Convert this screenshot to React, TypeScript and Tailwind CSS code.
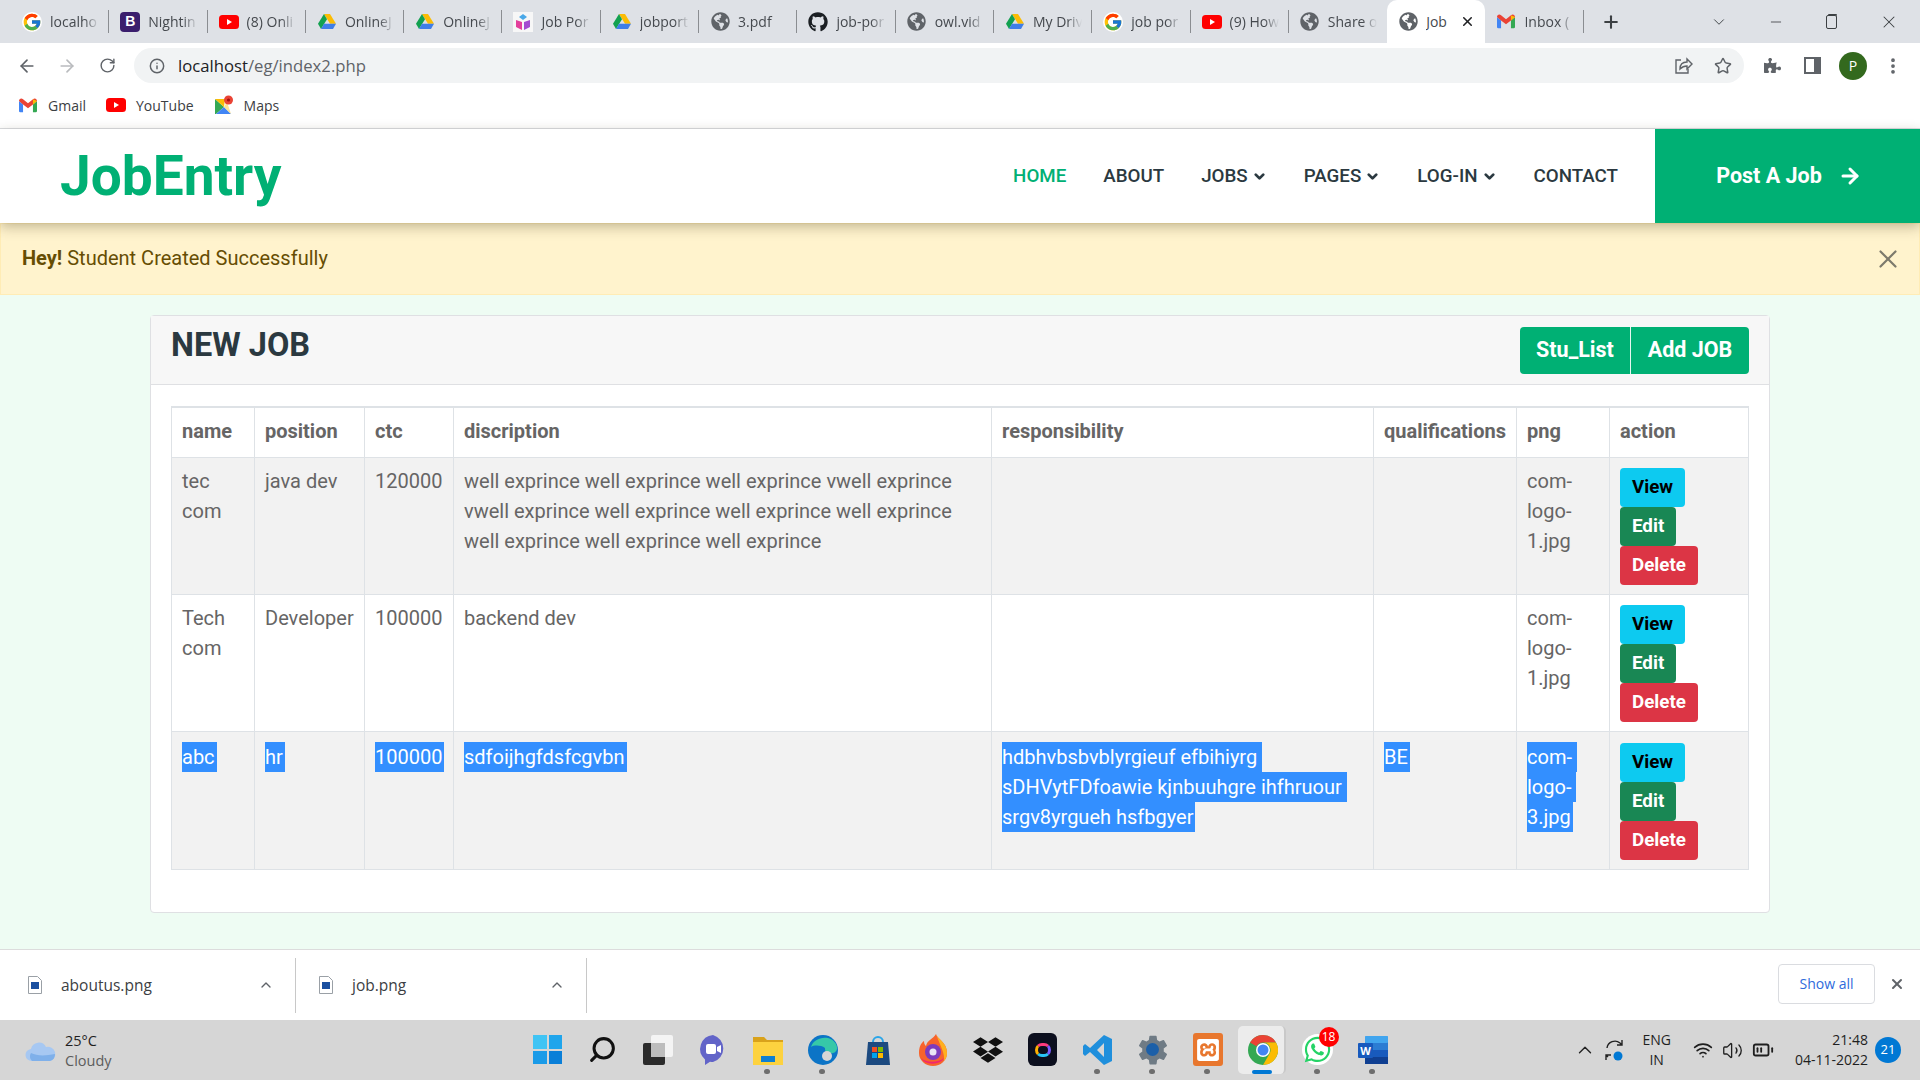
import type { ReactNode } from "react";
import { ArrowLeft, ArrowRight, ChevronDown, ChevronUp, Info, Minus, MoreVertical, Plus, RotateCw, Search, Star, Volume2, Wifi, X, BatteryMedium } from "lucide-react";
import { FaGithub, FaGlobeAmericas, FaDropbox, FaPuzzlePiece, FaWhatsapp } from "react-icons/fa";
import { FcGoogle } from "react-icons/fc";
import { SiXampp } from "react-icons/si";
import { IoSettingsSharp } from "react-icons/io5";

const GREEN = "bg-[#00b074]";

function DriveIcon() {
  return (
    <svg viewBox="0 0 24 22" className="w-[18px] h-[17px]">
      <path d="M8 1h8l8 13h-8z" fill="#fbbc04" />
      <path d="M8 1 0 14l4 7 8-13z" fill="#12a150" />
      <path d="M4 21h16l4-7H8z" fill="#3f7ee8" />
    </svg>
  );
}

function YoutubeIcon() {
  return (
    <svg viewBox="0 0 20 20" className="w-[20px] h-[20px]">
      <rect x="0" y="3" width="20" height="14" rx="3.5" fill="#f00" />
      <path d="M8 7l5 3-5 3z" fill="#fff" />
    </svg>
  );
}

function GmailIcon() {
  return (
    <svg viewBox="0 0 20 16" className="w-[18px] h-[15px]">
      <path d="M0 3v11a1.5 1.5 0 0 0 1.5 1.5H4.500V7z" fill="#4285f4" />
      <path d="M20 3v11a1.500 1.500 0 0 1-1.500 1.500H15.500V7z" fill="#34a853" />
      <path d="M0 3c0-2.500 2.500-3.500 4.500-2L10 5.500 15.500 1C17.500-.5 20 .5 20 3l-4.500 4L10 11 4.500 7z" fill="#ea4335" />
      <path d="M15.500 1 20 3l-4.500 4z" fill="#fbbc04" />
    </svg>
  );
}

function MapsIcon() {
  return (
    <svg viewBox="0 0 20 20" className="w-[20px] h-[20px]">
      <path d="M1 4l9 8-8 7H1z" fill="#34a853" />
      <path d="M2 19l8-7 7 7z" fill="#4285f4" />
      <path d="M1 4h10l-1 8z" fill="#fbbc04" />
      <path d="M10 12l3-5 4 12z" fill="#fde293" />
      <circle cx="14.500" cy="5" r="4.500" fill="#ea4335" />
      <circle cx="14.500" cy="5" r="1.600" fill="#a50e0e" />
    </svg>
  );
}

function BootstrapIcon() {
  return (
    <div className="w-[20px] h-[20px] rounded-[4px] bg-[#3b1e6d] text-white text-[14px] font-bold flex items-center justify-center font-['Liberation_Sans',sans-serif]">B</div>
  );
}

function JobPortalIcon() {
  return (
    <svg viewBox="0 0 20 20" className="w-[20px] h-[20px]">
      <rect width="20" height="20" fill="#f7f7f7" />
      <path d="M10 2l4 3-4 3-4-3z" fill="#4aa8e8" />
      <path d="M3 8l6 2v8l-6-3z" fill="#e33f9c" />
      <path d="M17 8l-6 2v8l6-3z" fill="#a44bd0" />
    </svg>
  );
}

function ShareIcon() {
  return (
    <svg viewBox="0 0 20 20" fill="none" stroke="#5f6368" strokeWidth="1.4" className="w-[20px] h-[20px] ml-auto">
      <path d="M8 4H3v13h12v-4" />
      <path d="M7 13c0-5 3-7 7-7V3l5 5-5 5v-3c-3 0-5 1-7 3z" />
    </svg>
  );
}

const Globe = () => <FaGlobeAmericas className="w-[19px] h-[19px] text-[#5f6368]" />;
const Google = () => <FcGoogle className="w-[20px] h-[20px] bg-white rounded-full" />;

const tabs: { title: string; icon: ReactNode; active?: boolean }[] = [
  { title: "localho", icon: <Google /> },
  { title: "Nightin", icon: <BootstrapIcon /> },
  { title: "(8) Onli", icon: <YoutubeIcon /> },
  { title: "OnlineJ", icon: <DriveIcon /> },
  { title: "OnlineJ", icon: <DriveIcon /> },
  { title: "Job Por", icon: <JobPortalIcon /> },
  { title: "jobport", icon: <DriveIcon /> },
  { title: "3.pdf", icon: <Globe /> },
  { title: "job-por", icon: <FaGithub className="w-[20px] h-[20px] text-[#1b1f23]" /> },
  { title: "owl.vid", icon: <Globe /> },
  { title: "My Driv", icon: <DriveIcon /> },
  { title: "job por", icon: <Google /> },
  { title: "(9) How", icon: <YoutubeIcon /> },
  { title: "Share o", icon: <Globe /> },
  { title: "Job", icon: <Globe />, active: true },
  { title: "Inbox (", icon: <GmailIcon /> },
];

function Tab({ title, icon, active, last }: { title: string; icon: ReactNode; active?: boolean; last?: boolean }) {
  return (
    <div className={`w-[98.3px] h-[43px] flex items-center pl-[10px] pr-[10px] shrink-0 relative ${active ? "bg-white rounded-t-[10px]" : ""}`}>
      <div className="w-[22px] flex justify-center shrink-0">{icon}</div>
      <div className={`ml-[7px] text-[14px] whitespace-nowrap overflow-hidden flex-1 text-[#45494e] ${active ? "" : "[mask-image:linear-gradient(to_right,black_70%,transparent)]"}`}>{title}</div>
      {active && <X className="w-[15px] h-[15px] text-[#202124] shrink-0" strokeWidth={2.5} />}
      {!active && !last && <div className="absolute right-0 top-[10px] h-[23px] w-px bg-[#8a8d91]" />}
    </div>
  );
}

function ChromeBar() {
  return (
    <div className="font-['Open_Sans',sans-serif]">
      <div className="h-[43px] bg-[#dee1e6] flex items-center pl-[11px]">
        {tabs.map((t, i) => (
          <Tab key={i} title={t.title} icon={t.icon} active={t.active} last={i === 13} />
        ))}
        <Plus className="w-[20px] h-[20px] text-[#3c4043] ml-[17px]" strokeWidth={2.5} />
        <ChevronDown className="w-[18px] h-[18px] text-[#3c4043] ml-[89px]" strokeWidth={1.25} />
        <Minus className="w-[16px] h-[16px] text-[#3c4043] ml-[40px]" strokeWidth={1.25} />
        <div className="ml-[42px] w-[11px] h-[14px] border border-[#3c4043] rounded-[2px] shadow-[1px_-2px_0_-1px_#3c4043]" />
        <X className="w-[20px] h-[20px] text-[#3c4043] ml-[42px]" strokeWidth={1.25} />
      </div>
      <div className="h-[41px] pt-[4px] bg-white flex items-center">
        <ArrowLeft className="w-[20px] h-[20px] text-[#5f6368] ml-[17px]" strokeWidth={2} />
        <ArrowRight className="w-[20px] h-[20px] text-[#b9bbbe] ml-[20px]" strokeWidth={2} />
        <RotateCw className="w-[17px] h-[17px] text-[#5f6368] ml-[22px]" strokeWidth={2} />
        <div className="ml-[18px] w-[1610px] h-[35px] rounded-full bg-[#f1f3f4] flex items-center pl-[15px]">
          <Info className="w-[16px] h-[16px] text-[#5f6368]" strokeWidth={2.2} />
          <div className="ml-[13px] text-[16.700px] text-[#202124]">localhost<span className="text-[#5f6368]">/eg/index2.php</span></div>
          <ShareIcon />
          <Star className="w-[18px] h-[18px] text-[#5f6368] ml-[21px] mr-[12px]" strokeWidth={2} />
        </div>
        <FaPuzzlePiece className="w-[17px] h-[17px] text-[#5f6368] ml-[20px]" />
        <div className="ml-[23px] w-[17px] h-[17px] border-[2.5px] border-[#5f6368] border-r-[7px]" />
        <div className="ml-[18px] w-[28px] h-[28px] rounded-full bg-[#33691e] text-white text-[14px] flex items-center justify-center">P</div>
        <MoreVertical className="w-[20px] h-[20px] text-[#5f6368] ml-[16px]" strokeWidth={2.5} />
      </div>
      <div className="h-[45px] pb-[2px] bg-white border-b border-[#dadce0] flex items-center text-[14px] text-[#3c4043]">
        <div className="ml-[19px] w-[18px] flex justify-center"><GmailIcon /></div>
        <span className="ml-[11px]">Gmail</span>
        <div className="ml-[20px]"><YoutubeIcon /></div>
        <span className="ml-[10px]">YouTube</span>
        <div className="ml-[20px]"><MapsIcon /></div>
        <span className="ml-[10px]">Maps</span>
      </div>
    </div>
  );
}

function NavItem({ label, active, caret }: { label: string; active?: boolean; caret?: boolean }) {
  return (
    <div className={`flex items-center gap-[4px] text-[18.750px] font-medium uppercase ${active ? "text-[#00b074]" : "text-[#2b3940]"}`}>
      {label}
      {caret && <ChevronDown className="w-[15px] h-[15px]" strokeWidth={4.5} />}
    </div>
  );
}

function Navbar() {
  return (
    <div className="h-[94px] bg-white flex items-center relative z-10 shadow-[0_4px_12px_rgba(60,50,20,0.3)]">
      <div className="ml-[60px] text-[55px] font-bold text-[#00b074] leading-none">JobEntry</div>
      <div className="ml-auto flex items-center gap-[37px] mr-[37px]">
        <NavItem label="Home" active />
        <NavItem label="About" />
        <NavItem label="Jobs" caret />
        <NavItem label="Pages" caret />
        <NavItem label="Log-in" caret />
        <NavItem label="Contact" />
      </div>
      <div className={`${GREEN} w-[265px] h-full pl-[3px] text-white text-[21.500px] font-bold flex items-center justify-center gap-[16px]`}>
        Post A Job
        <ArrowRight className="w-[24px] h-[24px]" strokeWidth={3} />
      </div>
    </div>
  );
}

function Actions() {
  return (
    <div className="flex flex-col items-start text-[18.750px] font-bold leading-[26px]">
      <div className="h-[39px] px-[12px] rounded-[4px] bg-[#0dcaf0] text-black flex items-center">View</div>
      <div className="h-[39px] px-[12px] rounded-[4px] bg-[#198754] text-white flex items-center">Edit</div>
      <div className="h-[39px] px-[12px] rounded-[4px] bg-[#dc3545] text-white flex items-center">Delete</div>
    </div>
  );
}

function Sel({ lines }: { lines: string[] }) {
  return (
    <div className="mt-[2px]">
      {lines.map((l, i) => (
        <div key={i} className={`w-fit h-[30px] bg-[#338fff] text-white whitespace-nowrap ${lines.length > 1 && i < lines.length - 1 ? "pr-[5px]" : "pr-[2px]"}`}>{l}</div>
      ))}
    </div>
  );
}

const heads = ["name", "position", "ctc", "discription", "responsibility", "qualifications", "png", "action"];
const cell = "border border-[#dee2e6] px-[10px] pt-[8px] pb-[9px] align-top";

function JobTable() {
  return (
    <table className="w-[1577px] table-fixed border-collapse text-[20px] leading-[30px] text-[#666565] border-t-2 border-[#dee2e6]">
      <colgroup>
        <col className="w-[83px]" />
        <col className="w-[110px]" />
        <col className="w-[89px]" />
        <col className="w-[538px]" />
        <col className="w-[382px]" />
        <col className="w-[143px]" />
        <col className="w-[93px]" />
        <col className="w-[139px]" />
      </colgroup>
      <thead>
        <tr className="h-[50px]">
          {heads.map((h) => (
            <th key={h} className="border border-[#dee2e6] px-[10px] pb-[2px] text-left font-bold align-middle">{h}</th>
          ))}
        </tr>
      </thead>
      <tbody>
        <tr className="h-[137px] bg-[#f2f2f2]">
          <td className={cell}>tec com</td>
          <td className={cell}>java dev</td>
          <td className={cell}>120000</td>
          <td className={cell}>well exprince well exprince well exprince vwell exprince vwell exprince well exprince well exprince well exprince well exprince well exprince well exprince</td>
          <td className={cell}></td>
          <td className={cell}></td>
          <td className={cell}>com-logo-1.jpg</td>
          <td className={cell}><div className="pt-[2px]"><Actions /></div></td>
        </tr>
        <tr className="h-[137px] bg-white">
          <td className={cell}>Tech com</td>
          <td className={cell}>Developer</td>
          <td className={cell}>100000</td>
          <td className={cell}>backend dev</td>
          <td className={cell}></td>
          <td className={cell}></td>
          <td className={cell}>com-logo-1.jpg</td>
          <td className={cell}><div className="pt-[2px]"><Actions /></div></td>
        </tr>
        <tr className="h-[138px] bg-[#f2f2f2]">
          <td className={cell}><Sel lines={["abc"]} /></td>
          <td className={cell}><Sel lines={["hr"]} /></td>
          <td className={cell}><Sel lines={["100000"]} /></td>
          <td className={cell}><Sel lines={["sdfoijhgfdsfcgvbn"]} /></td>
          <td className={cell}><Sel lines={["hdbhvbsbvblyrgieuf efbihiyrg", "sDHVytFDfoawie kjnbuuhgre ihfhruour", "srgv8yrgueh hsfbgyer"]} /></td>
          <td className={cell}><Sel lines={["BE"]} /></td>
          <td className={cell}><Sel lines={["com-", "logo-", "3.jpg"]} /></td>
          <td className={cell}><div className="pt-[3px]"><Actions /></div></td>
        </tr>
      </tbody>
    </table>
  );
}

function Page() {
  return (
    <div className="h-[820px] bg-[#eefcf3] font-['Roboto',sans-serif]">
      <Navbar />
      <div className="h-[72px] bg-[#fff3cd] border border-[#ffecb5] flex items-center pl-[21px] pr-[16px] text-[20px] text-[#664d03]">
        <span className="-mt-[2px]"><b>Hey!</b> Student Created Successfully</span>
        <X className="w-[30px] h-[30px] text-[#7d7a6c] ml-auto" strokeWidth={1.75} />
      </div>
      <div className="mx-[150px] mt-[20px] h-[598px] bg-white border border-[#dfe0e3] rounded-[4px]">
        <div className="h-[69px] bg-[#f7f7f7] border-b border-[#dfe0e3] flex items-start justify-between pl-[20px] pr-[20px]">
          <div className="text-[32.500px] font-bold text-[#2b3940] mt-[11px] leading-[36px]">NEW JOB</div>
          <div className="flex mt-[11px] text-white text-[21.500px] font-bold">
            <div className={`${GREEN} h-[47px] w-[111px] rounded-l-[4px] flex items-center justify-center border-r border-[#e6f7f0]`}>Stu_List</div>
            <div className={`${GREEN} h-[47px] w-[118px] rounded-r-[4px] flex items-center justify-center`}>Add JOB</div>
          </div>
        </div>
        <div className="px-[20px] pt-[21px]">
          <JobTable />
        </div>
      </div>
    </div>
  );
}

function DownloadItem({ name, width, pad }: { name: string; width: string; pad: string }) {
  return (
    <div className={`h-[55px] ${width} ${pad} flex items-center pr-[21px] border-r border-[#c8c8c8]`}>
      <svg viewBox="0 0 14 18" className="w-[14px] h-[18px]">
        <path d="M.5.500h9l4 4v13H.500z" fill="#fff" stroke="#9aa0a6" />
        <rect x="3" y="6" width="8" height="7" fill="#1a4fa0" />
      </svg>
      <span className="ml-[19px] mt-[1px] text-[15.500px] text-[#3c4043]">{name}</span>
      <ChevronUp className="w-[16px] h-[16px] text-[#5f6368] ml-auto" strokeWidth={2} />
    </div>
  );
}

function DownloadBar() {
  return (
    <div className="h-[71px] bg-white border-t border-[#dcdcdc] flex items-center font-['Open_Sans',sans-serif]">
      <DownloadItem name="aboutus.png" width="w-[296px]" pad="pl-[28px]" />
      <DownloadItem name="job.png" width="w-[291px]" pad="pl-[23px]" />
      <div className="ml-auto mb-[3px] w-[97px] h-[40px] rounded-[4px] border border-[#dadce0] flex items-center justify-center text-[14px] text-[#2f6bdc]">Show all</div>
      <X className="w-[16px] h-[16px] text-[#5f6368] ml-[14px] mr-[15px] mb-[2px]" strokeWidth={3} />
    </div>
  );
}

function Dock({ children, dot, active }: { children: ReactNode; dot?: boolean; active?: boolean }) {
  return (
    <div className="w-[55px] h-[60px] flex items-center justify-center relative shrink-0">
      {active && <div className="absolute left-[3px] top-[6px] w-[48px] h-[48px] rounded-[5px] bg-[#ececec] border-r-2 border-[#c9c9c9]" />}
      <div className="relative w-[32px] h-[32px] flex items-center justify-center mb-[1px]">{children}</div>
      {dot && <div className="absolute bottom-[6px] left-[24px] w-[6px] h-[5px] rounded-full bg-[#6e6e6e]" />}
      {active && <div className="absolute bottom-[6px] left-[17px] w-[20px] h-[4px] rounded-full bg-[#0078d4]" />}
    </div>
  );
}

function Taskbar() {
  return (
    <div className="h-[60px] bg-[#d6d6d6] flex items-center font-['Open_Sans',sans-serif]">
      <div className="w-[520px] shrink-0 flex items-center pl-[25px] pt-[2px]">
        <svg viewBox="0 0 32 24" className="w-[32px] h-[24px]">
          <path d="M7 22a6 6 0 0 1-1-12 8 8 0 0 1 15-2 7 7 0 0 1 4 14z" fill="#a7c8f2" />
          <path d="M7 22a6 6 0 0 1-1-8c6 3 14 3 24 1a7 7 0 0 1-5 7z" fill="#7fb0ea" />
        </svg>
        <div className="ml-[8px] text-[14.500px] leading-[20px]">
          <div className="text-[#1f1f1f]">25°C</div>
          <div className="text-[#5c5c5c]">Cloudy</div>
        </div>
      </div>
      <Dock>
        <div className="grid grid-cols-2 gap-[2px] w-[29px] h-[29px]">
          <div className="bg-[#40c4f4]" /><div className="bg-[#1fa5ec]" /><div className="bg-[#1a9be8]" /><div className="bg-[#0a7fd8]" />
        </div>
      </Dock>
      <Dock><Search className="w-[29px] h-[29px] text-[#111] -scale-x-100" strokeWidth={2.5} /></Dock>
      <Dock>
        <div className="relative w-[30px] h-[30px]">
          <div className="absolute right-0 top-0 w-[22px] h-[22px] bg-[#f4f4f4] rounded-[2px]" />
          <div className="absolute left-0 bottom-0 w-[22px] h-[22px] bg-[#2b2b2b] rounded-[2px]" />
          <div className="absolute left-[8px] top-[8px] w-[14px] h-[14px] bg-[#bdbdbd]" />
        </div>
      </Dock>
      <Dock>
        <svg viewBox="0 0 30 32" className="w-[30px] h-[32px]">
          <path d="M15 1a14 14 0 0 1 0 27c-1 0-2 0-3-.300L7 31v-5.500A14 14 0 0 1 15 1z" fill="#6264c8" />
          <rect x="8" y="10" width="10" height="10" rx="2" fill="#fff" />
          <path d="M19 13l4-2v8l-4-2z" fill="#fff" />
        </svg>
      </Dock>
      <Dock dot>
        <svg viewBox="0 0 30 30" className="w-[30px] h-[30px]">
          <path d="M0 2h11l3 3h16v5H0z" fill="#d9a21b" />
          <path d="M0 7h30v23H0z" fill="#fdd23f" />
          <rect x="8" y="21" width="14" height="6" fill="#0f7fd0" />
        </svg>
      </Dock>
      <Dock dot>
        <svg viewBox="0 0 30 30" className="w-[30px] h-[30px]">
          <circle cx="15" cy="15" r="15" fill="#0c74c6" />
          <path d="M3 12C6 2 22-1 28 9c3 6-1 10-6 9-5 0-5-3-5-5-4-3-11-3-14-1z" fill="#36c8a8" />
          <circle cx="19" cy="21" r="5" fill="#d6d6d6" />
        </svg>
      </Dock>
      <Dock>
        <svg viewBox="0 0 30 30" className="w-[30px] h-[30px]">
          <path d="M5 7h20l2 23H3z" fill="#1c4a80" />
          <path d="M10 7a5 5 0 0 1 10 0" fill="none" stroke="#2aa5e8" strokeWidth="2" />
          <rect x="9" y="12" width="5" height="5" fill="#f25022" /><rect x="15" y="12" width="5" height="5" fill="#7fba00" />
          <rect x="9" y="18" width="5" height="5" fill="#00a4ef" /><rect x="15" y="18" width="5" height="5" fill="#ffb900" />
        </svg>
      </Dock>
      <Dock>
        <svg viewBox="0 0 30 32" className="w-[30px] h-[32px]">
          <path d="M18 0c1 5 11 8 11 19a14 13 0 0 1-28 0C1 13 3 9 6 7c0 3 1 4 2 5 1-6 7-7 10-12z" fill="#f7632c" />
          <path d="M18 0c1 5 11 8 11 19 0 3-1 6-3 8 1-8-3-13-8-27z" fill="#ffb01f" />
          <circle cx="15" cy="18" r="8" fill="#7d3bbd" />
          <circle cx="15" cy="18" r="3.500" fill="#e9e4f5" />
          <path d="M3 24c5 5 17 5 23 0-3 7-19 8-23 0z" fill="#f0266f" />
        </svg>
      </Dock>
      <Dock><FaDropbox className="w-[30px] h-[30px] text-[#111]" /></Dock>
      <Dock>
        <div className="w-[29px] h-[33px] rounded-[6px] bg-[#0c0f1e] flex items-center justify-center">
          <div className="w-[16px] h-[14px] rounded-full border-[3px] border-t-[#ff3b7c] border-r-[#7c5cff] border-b-[#29c4f6] border-l-[#ffb000]" />
        </div>
      </Dock>
      <Dock dot>
        <svg viewBox="0 0 30 30" className="w-[30px] h-[30px]">
          <path d="M21 0l8 4v22l-8 4L7 17l-5 4-2-2v-8l2-2 5 4zm0 8-7 7 7 7z" fill="#1f8fdc" />
        </svg>
      </Dock>
      <Dock dot>
        <div className="relative flex items-center justify-center">
          <IoSettingsSharp className="w-[32px] h-[32px] text-[#6f7b85]" />
          <div className="absolute w-[13px] h-[13px] rounded-full bg-[#1b5fa8]" />
        </div>
      </Dock>
      <Dock dot>
        <div className="w-[30px] h-[33px] rounded-[3px] bg-[#e8772e] flex items-center justify-center">
          <SiXampp className="w-[22px] h-[22px] text-white" />
        </div>
      </Dock>
      <Dock active>
        <svg viewBox="0 0 30 30" className="w-[30px] h-[30px]">
          <circle cx="15" cy="15" r="15" fill="#34a853" />
          <path d="M15 0a15 15 0 0 1 13 7.500H15a7.500 7.500 0 0 0-6.500 3.750L2 7.500A15 15 0 0 1 15 0z" fill="#ea4335" />
          <path d="M28 7.500A15 15 0 0 1 15 30l6.500-11.250A7.500 7.500 0 0 0 15 7.500z" fill="#fbbc04" />
          <circle cx="15" cy="15" r="7" fill="#fff" />
          <circle cx="15" cy="15" r="5.500" fill="#4285f4" />
        </svg>
      </Dock>
      <Dock dot>
        <div className="w-[31px] h-[31px] rounded-full bg-white flex items-center justify-center">
          <FaWhatsapp className="w-[29px] h-[29px] text-[#25d366]" />
        </div>
        <div className="absolute -top-[7px] left-[17px] w-[20px] h-[20px] rounded-full bg-[#f00] text-white text-[12px] flex items-center justify-center">18</div>
      </Dock>
      <Dock dot>
        <svg viewBox="0 0 30 30" className="w-[30px] h-[30px]">
          <rect x="7" y="1" width="23" height="28" rx="2" fill="#2b7cd3" />
          <rect x="7" y="1" width="23" height="7" rx="1" fill="#41a5ee" />
          <rect x="7" y="15" width="23" height="7" fill="#185abd" />
          <rect x="7" y="22" width="23" height="7" fill="#103f91" />
          <rect x="0" y="8" width="15" height="15" rx="1" fill="#185abd" />
          <text x="7.500" y="19.500" fontSize="11" fontWeight="700" fill="#fff" textAnchor="middle">W</text>
        </svg>
      </Dock>
      <div className="ml-auto flex items-center text-[14px] text-[#1f1f1f]">
        <ChevronUp className="w-[22px] h-[22px] text-[#222]" strokeWidth={1.5} />
        <svg viewBox="0 0 22 24" fill="none" stroke="#222" strokeWidth="1.4" className="w-[22px] h-[24px] ml-[6.500px]">
          <path d="M4 10a8 8 0 0 1 13-5l2 2M19 2v5h-5" />
          <path d="M3 17l2 2M3 22v-5h5" />
          <circle cx="15" cy="18" r="4.500" fill="#0078d4" stroke="none" />
        </svg>
        <div className="ml-[17.500px] text-center leading-[20px]"><div>ENG</div><div>IN</div></div>
        <Wifi className="w-[20px] h-[20px] ml-[22.500px]" strokeWidth={2} />
        <Volume2 className="w-[21px] h-[21px] ml-[9px]" strokeWidth={1.5} />
        <BatteryMedium className="w-[22px] h-[22px] ml-[9px]" strokeWidth={2} />
        <div className="ml-[20.500px] text-right leading-[20px]"><div>21:48</div><div>04-11-2022</div></div>
        <div className="ml-[7px] mr-[19px] w-[26px] h-[26px] rounded-full bg-[#0078d4] text-white text-[13px] flex items-center justify-center">21</div>
      </div>
    </div>
  );
}

export default function App() {
  return (
    <div className="w-[1920px] h-[1080px] overflow-hidden flex flex-col">
      <ChromeBar />
      <Page />
      <DownloadBar />
      <Taskbar />
    </div>
  );
}
